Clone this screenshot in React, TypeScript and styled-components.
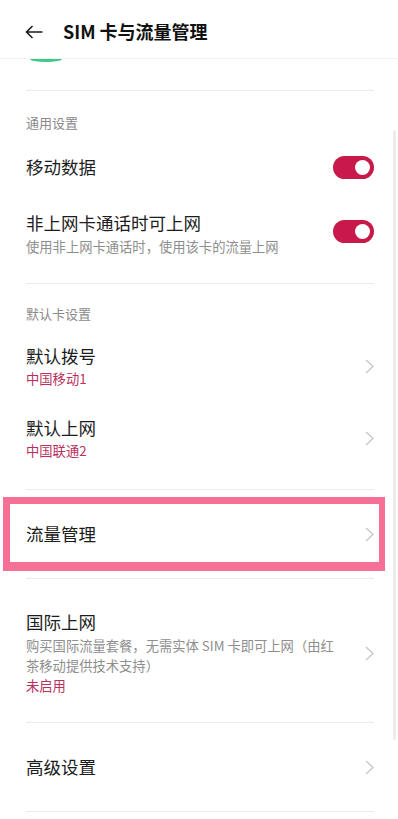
import styled, { createGlobalStyle } from 'styled-components';

const GlobalStyle = createGlobalStyle`
  html, body {
    margin: 0;
    padding: 0;
    background: #fff;
    overflow: hidden;
  }
  body {
    font-family: "Noto Sans CJK SC", "Noto Sans", Roboto, sans-serif;
    color: #1c1c1c;
  }
`;

const Screen = styled.div`
  position: relative;
  width: 398px;
  height: 819px;
  background: #fff;
  overflow: hidden;
`;

const Header = styled.div`
  display: flex;
  align-items: center;
  height: 59px;
  padding-left: 25px;
  border-bottom: 1px solid #f2f2f2;
  box-sizing: border-box;
`;

const BackButton = styled.button`
  display: flex;
  align-items: center;
  padding: 0;
  margin: 0 20px 0 0;
  border: none;
  background: none;
  width: 18px;
  height: 18px;
  margin-top: 6px;
`;

const Title = styled.h1`
  margin: 0;
  font-size: 18px;
  font-weight: 700;
  line-height: 24px;
  margin-top: 4px;
  color: #111;
`;

const GreenStub = styled.div`
  width: 32px;
  height: 3px;
  margin-left: 30px;
  background: #3cc985;
  border-radius: 0 0 16px 16px / 0 0 3px 3px;
`;

const Divider = styled.div<{ $top?: number }>`
  height: 1px;
  margin: ${({ $top }) => $top ?? 0}px 24px 0 26px;
  background: #ececec;
`;

const SectionLabel = styled.div<{ $pt: number; $pb: number }>`
  padding: ${({ $pt }) => $pt}px 26px ${({ $pb }) => $pb}px;
  font-size: 13px;
  line-height: 18px;
  color: #8a8a8a;
`;

const Row = styled.div<{ $pt: number; $pb: number; $h?: number }>`
  position: relative;
  display: flex;
  align-items: center;
  padding: ${({ $pt }) => $pt}px 24px ${({ $pb }) => $pb}px 26px;
  ${({ $h }) => ($h ? `height: ${$h}px; box-sizing: border-box;` : '')}
`;

const TextCol = styled.div`
  flex: 1;
  display: flex;
  flex-direction: column;
  margin-right: 24px;
`;

const ItemTitle = styled.div`
  font-size: 17.5px;
  line-height: 24px;
  color: #1c1c1c;
`;

const ItemDesc = styled.div<{ $mt?: number }>`
  font-size: 13.3px;
  line-height: 20px;
  color: #8e8e8e;
  margin-top: ${({ $mt }) => $mt ?? 0}px;
`;

const ItemStatus = styled.div<{ $mt?: number }>`
  font-size: 13.3px;
  line-height: 20px;
  color: #b9305c;
  margin-top: ${({ $mt }) => $mt ?? 0}px;
`;

const Toggle = styled.div<{ $shift?: number }>`
  position: relative;
  flex-shrink: 0;
  width: 41px;
  height: 23px;
  border-radius: 12px;
  background: #c8194a;
  margin-top: ${({ $shift }) => ($shift ? $shift * 2 : 0)}px;

  &::after {
    content: '';
    position: absolute;
    top: 4px;
    right: 4px;
    width: 15px;
    height: 15px;
    border-radius: 50%;
    background: #fff;
  }
`;

const ChevronWrap = styled.div`
  display: flex;
  flex-shrink: 0;
  width: 9px;
  height: 15px;
`;

const Highlight = styled.div`
  position: absolute;
  top: 7px;
  left: 3px;
  right: 13px;
  bottom: 7px;
  border: 7px solid #f66f94;
  border-bottom-width: 9px;
  border-right-width: 6px;
  pointer-events: none;
`;

const ScrollBar = styled.div`
  position: absolute;
  top: 130px;
  right: 2px;
  width: 3px;
  height: 610px;
  background: #ececec;
  border-radius: 2px;
`;

function Chevron() {
  return (
    <ChevronWrap>
      <svg width="9" height="15" viewBox="0 0 9 15" fill="none">
        <path d="M1 1 L8 7.5 L1 14" stroke="#c6c6c6" strokeWidth="1.3" />
      </svg>
    </ChevronWrap>
  );
}

export default function App() {
  return (
    <Screen>
      <GlobalStyle />
      <Header>
        <BackButton aria-label="back">
          <svg width="18" height="14" viewBox="0 0 18 14" fill="none">
            <path d="M17.5 7 H1.5 M7.5 1 L1.5 7 L7.5 13" stroke="#1c1c1c" strokeWidth="1.6" />
          </svg>
        </BackButton>
        <Title>SIM 卡与流量管理</Title>
      </Header>

      <GreenStub />
      <Divider $top={28} />

      <SectionLabel $pt={23} $pb={0}>通用设置</SectionLabel>
      <Row $pt={0} $pb={0} $h={70}>
        <TextCol>
          <ItemTitle>移动数据</ItemTitle>
        </TextCol>
        <Toggle />
      </Row>
      <Row $pt={9} $pb={26}>
        <TextCol>
          <ItemTitle>非上网卡通话时可上网</ItemTitle>
          <ItemDesc $mt={2}>使用非上网卡通话时，使用该卡的流量上网</ItemDesc>
        </TextCol>
        <Toggle $shift={-3} />
      </Row>
      <Divider />

      <SectionLabel $pt={21} $pb={8}>默认卡设置</SectionLabel>
      <Row $pt={13} $pb={13}>
        <TextCol>
          <ItemTitle>默认拨号</ItemTitle>
          <ItemStatus $mt={1}>中国移动1</ItemStatus>
        </TextCol>
        <Chevron />
      </Row>
      <Row $pt={14} $pb={14}>
        <TextCol>
          <ItemTitle>默认上网</ItemTitle>
          <ItemStatus $mt={1}>中国联通2</ItemStatus>
        </TextCol>
        <Chevron />
      </Row>
      <Divider $top={14} />

      <Row $pt={0} $pb={0} $h={88}>
        <TextCol>
          <ItemTitle>流量管理</ItemTitle>
        </TextCol>
        <Chevron />
        <Highlight />
      </Row>
      <Divider />

      <Row $pt={31} $pb={26}>
        <TextCol>
          <ItemTitle>国际上网</ItemTitle>
          <ItemDesc $mt={2}>购买国际流量套餐，无需实体 SIM 卡即可上网（由红茶移动提供技术支持）</ItemDesc>
          <ItemStatus>未启用</ItemStatus>
        </TextCol>
        <Chevron />
      </Row>
      <Divider />

      <Row $pt={0} $pb={0} $h={88}>
        <TextCol>
          <ItemTitle>高级设置</ItemTitle>
        </TextCol>
        <Chevron />
      </Row>
      <Divider />

      <ScrollBar />
    </Screen>
  );
}
